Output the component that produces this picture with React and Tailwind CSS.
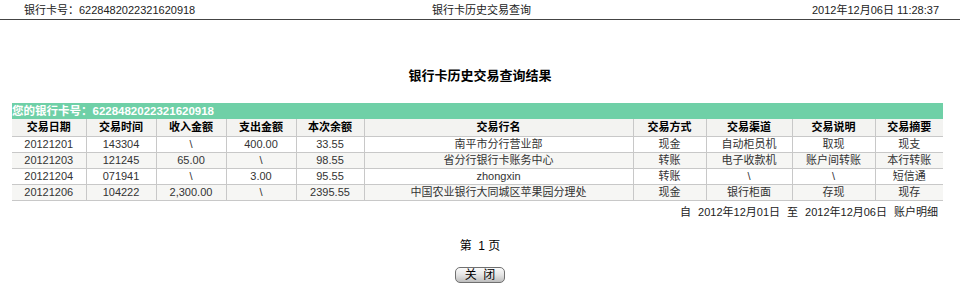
import React from 'react';

const rows = [
    ['20121201', '143304', '\\', '400.00', '33.55', '南平市分行营业部', '现金', '自动柜员机', '取现', '现支'],
    ['20121203', '121245', '65.00', '\\', '98.55', '省分行银行卡账务中心', '转账', '电子收款机', '账户间转账', '本行转账'],
    ['20121204', '071941', '\\', '3.00', '95.55', 'zhongxin', '转账', '\\', '\\', '短信通'],
    ['20121206', '104222', '2,300.00', '\\', '2395.55', '中国农业银行大同城区苹果园分理处', '现金', '银行柜面', '存现', '现存'],
];

const headers = ['交易日期', '交易时间', '收入金额', '支出金额', '本次余额', '交易行名', '交易方式', '交易渠道', '交易说明', '交易摘要'];

const App = () => {
    return (
        <div className="w-[960px] h-[298px] bg-white text-[11px] text-[#333] font-['Liberation_Sans','Noto_Sans_CJK_SC',sans-serif]">
            {/* top bar */}
            <div className="grid grid-cols-3 h-[20px] items-center border-b border-[#444] px-[24px] pr-[21px] leading-[20px] text-[#222]">
                <div>银行卡号：6228482022321620918</div>
                <div className="text-center">银行卡历史交易查询</div>
                <div className="text-right">2012年12月06日 11:28:37</div>
            </div>

            <div className="pt-[48px] text-center font-bold text-[13px] leading-[16px] text-black">
                银行卡历史交易查询结果
            </div>

            <div className="ml-[12px] w-[931px] mt-[19px]">
                <div className="h-[16px] leading-[16px] bg-[#6fd0a7] text-white font-bold text-[11.5px]">
                    您的银行卡号：6228482022321620918
                </div>
                <table className="w-full table-fixed border-collapse">
                    <colgroup>
                        <col className="w-[74px]" />
                        <col className="w-[70px]" />
                        <col className="w-[70px]" />
                        <col className="w-[70px]" />
                        <col className="w-[68px]" />
                        <col className="w-[269px]" />
                        <col className="w-[73px]" />
                        <col className="w-[86px]" />
                        <col className="w-[83px]" />
                        <col className="w-[68px]" />
                    </colgroup>
                    <thead>
                        <tr className="bg-[#f3f3f1] h-[17px]">
                            {headers.map((h, i) => (
                                <th key={h} className={`p-0 font-bold text-black text-center leading-[16px] border-b border-[#c8c8c8] ${i > 0 ? 'border-l' : ''}`}>
                                    {h}
                                </th>
                            ))}
                        </tr>
                    </thead>
                    <tbody>
                        {rows.map((row, r) => (
                            <tr key={row[0]} className={`h-[16px] ${r % 2 === 1 ? 'bg-[#f6f6f4]' : 'bg-white'}`}>
                                {row.map((cell, i) => (
                                    <td key={i} className={`p-0 text-center leading-[15px] border-b border-[#c8c8c8] ${i > 0 ? 'border-l' : ''}`}>
                                        {cell}
                                    </td>
                                ))}
                            </tr>
                        ))}
                    </tbody>
                </table>
                <div className="flex justify-end gap-[7px] pr-[5px] pt-[3px] leading-[16px] text-[#222]">
                    <span>自</span>
                    <span>2012年12月01日</span>
                    <span>至</span>
                    <span>2012年12月06日</span>
                    <span>账户明细</span>
                </div>
            </div>

            <div className="text-center pt-[18px] leading-[16px] text-black text-[12px]">
                第&nbsp;&nbsp;1&nbsp;页
            </div>

            <div className="flex justify-center pt-[13px]">
                <button className="w-[50px] h-[16px] leading-[14px] text-[12px] text-black rounded-[5px] border border-[#707070] bg-linear-to-b from-[#fbfbfb] via-[#e4e4e4] to-[#bdbdbd]">
                    关&nbsp;&nbsp;闭
                </button>
            </div>
        </div>
    );
};

export default App;
